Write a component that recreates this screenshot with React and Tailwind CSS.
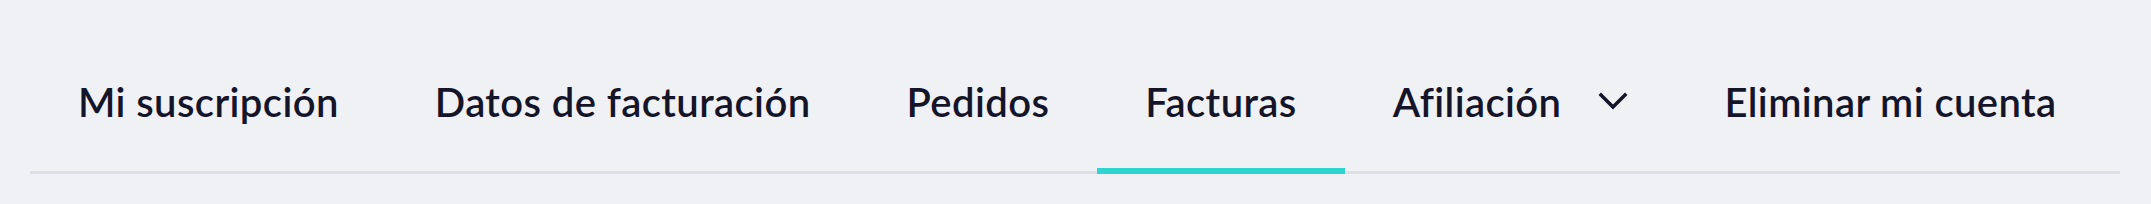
import React from "react";

const tabs = [
  { label: "Mi suscripción" },
  { label: "Datos de facturación" },
  { label: "Pedidos" },
  { label: "Facturas", active: true },
  { label: "Afiliación", dropdown: true },
  { label: "Eliminar mi cuenta" },
];

const App = () => {
  return (
    <div className="min-h-[204px] w-full bg-[#f0f1f5] pl-[30px] pr-[31px] pt-[32px] font-['Lato',sans-serif]">
      <nav className="flex border-b-[3px] border-[#dddee7]">
        {tabs.map((tab) => (
          <button
            key={tab.label}
            className="relative flex h-[139px] shrink-0 items-center whitespace-nowrap px-[48px] text-[40px] font-semibold tracking-[0.4px] text-[#15152a]"
          >
            <span>{tab.label}</span>
            {tab.dropdown && (
              <svg
                xmlns="http://www.w3.org/2000/svg"
                width="30"
                height="18"
                viewBox="0 0 30 18"
                fill="none"
                stroke="currentColor"
                strokeWidth="3.5"
                strokeLinecap="square"
                strokeLinejoin="miter"
                className="ml-[37px] mt-[-2px]"
              >
                <polyline points="3 3 15 15 27 3"></polyline>
              </svg>
            )}
            {tab.active && (
              <span className="absolute bottom-[-3px] left-0 right-0 h-[6px] bg-[#2dd4d0]"></span>
            )}
          </button>
        ))}
      </nav>
    </div>
  );
};

export default App;
